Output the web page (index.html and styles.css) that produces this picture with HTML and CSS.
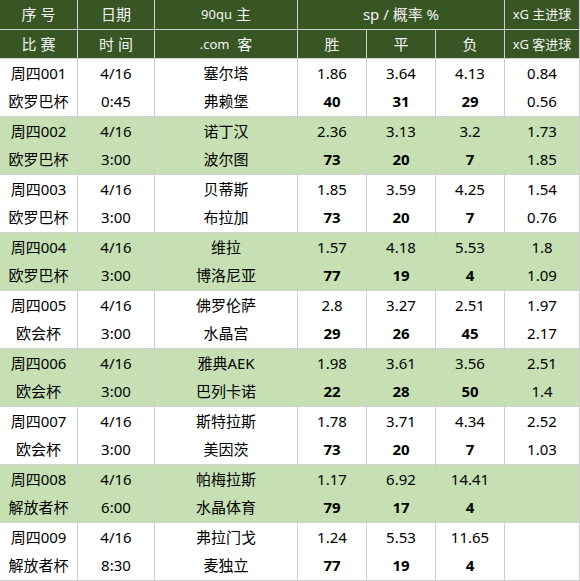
FILE: index.html
```html
<!DOCTYPE html>
<html lang="zh">
<head>
<meta charset="utf-8">
<title>90qu</title>
<link rel="stylesheet" href="styles.css">
</head>
<body>
<div class="sheet">
  <div class="hd">序 号</div>
  <div class="hd">日期</div>
  <div class="hd"><span class="sm">90qu</span>&nbsp;主</div>
  <div class="hd span3 mid">sp / 概率 %</div>
  <div class="hd xg">xG 主进球</div>

  <div class="hd">比 赛</div>
  <div class="hd">时 间</div>
  <div class="hd"><span class="sm">.com</span>&nbsp;&nbsp;客</div>
  <div class="hd">胜</div>
  <div class="hd">平</div>
  <div class="hd">负</div>
  <div class="hd xg">xG 客进球</div>

  <div class="c"><span>周四001</span><span>欧罗巴杯</span></div>
  <div class="c"><span>4/16</span><span>0:45</span></div>
  <div class="c"><span>塞尔塔</span><span>弗赖堡</span></div>
  <div class="c"><span>1.86</span><b>40</b></div>
  <div class="c"><span>3.64</span><b>31</b></div>
  <div class="c"><span>4.13</span><b>29</b></div>
  <div class="c"><span>0.84</span><span>0.56</span></div>

  <div class="c alt"><span>周四002</span><span>欧罗巴杯</span></div>
  <div class="c alt"><span>4/16</span><span>3:00</span></div>
  <div class="c alt"><span>诺丁汉</span><span>波尔图</span></div>
  <div class="c alt"><span>2.36</span><b>73</b></div>
  <div class="c alt"><span>3.13</span><b>20</b></div>
  <div class="c alt"><span>3.2</span><b>7</b></div>
  <div class="c alt"><span>1.73</span><span>1.85</span></div>

  <div class="c"><span>周四003</span><span>欧罗巴杯</span></div>
  <div class="c"><span>4/16</span><span>3:00</span></div>
  <div class="c"><span>贝蒂斯</span><span>布拉加</span></div>
  <div class="c"><span>1.85</span><b>73</b></div>
  <div class="c"><span>3.59</span><b>20</b></div>
  <div class="c"><span>4.25</span><b>7</b></div>
  <div class="c"><span>1.54</span><span>0.76</span></div>

  <div class="c alt"><span>周四004</span><span>欧罗巴杯</span></div>
  <div class="c alt"><span>4/16</span><span>3:00</span></div>
  <div class="c alt"><span>维拉</span><span>博洛尼亚</span></div>
  <div class="c alt"><span>1.57</span><b>77</b></div>
  <div class="c alt"><span>4.18</span><b>19</b></div>
  <div class="c alt"><span>5.53</span><b>4</b></div>
  <div class="c alt"><span>1.8</span><span>1.09</span></div>

  <div class="c"><span>周四005</span><span>欧会杯</span></div>
  <div class="c"><span>4/16</span><span>3:00</span></div>
  <div class="c"><span>佛罗伦萨</span><span>水晶宫</span></div>
  <div class="c"><span>2.8</span><b>29</b></div>
  <div class="c"><span>3.27</span><b>26</b></div>
  <div class="c"><span>2.51</span><b>45</b></div>
  <div class="c"><span>1.97</span><span>2.17</span></div>

  <div class="c alt"><span>周四006</span><span>欧会杯</span></div>
  <div class="c alt"><span>4/16</span><span>3:00</span></div>
  <div class="c alt"><span>雅典AEK</span><span>巴列卡诺</span></div>
  <div class="c alt"><span>1.98</span><b>22</b></div>
  <div class="c alt"><span>3.61</span><b>28</b></div>
  <div class="c alt"><span>3.56</span><b>50</b></div>
  <div class="c alt"><span>2.51</span><span>1.4</span></div>

  <div class="c"><span>周四007</span><span>欧会杯</span></div>
  <div class="c"><span>4/16</span><span>3:00</span></div>
  <div class="c"><span>斯特拉斯</span><span>美因茨</span></div>
  <div class="c"><span>1.78</span><b>73</b></div>
  <div class="c"><span>3.71</span><b>20</b></div>
  <div class="c"><span>4.34</span><b>7</b></div>
  <div class="c"><span>2.52</span><span>1.03</span></div>

  <div class="c alt"><span>周四008</span><span>解放者杯</span></div>
  <div class="c alt"><span>4/16</span><span>6:00</span></div>
  <div class="c alt"><span>帕梅拉斯</span><span>水晶体育</span></div>
  <div class="c alt"><span>1.17</span><b>79</b></div>
  <div class="c alt"><span>6.92</span><b>17</b></div>
  <div class="c alt"><span>14.41</span><b>4</b></div>
  <div class="c alt"></div>

  <div class="c"><span>周四009</span><span>解放者杯</span></div>
  <div class="c"><span>4/16</span><span>8:30</span></div>
  <div class="c"><span>弗拉门戈</span><span>麦独立</span></div>
  <div class="c"><span>1.24</span><b>77</b></div>
  <div class="c"><span>5.53</span><b>19</b></div>
  <div class="c"><span>11.65</span><b>4</b></div>
  <div class="c"></div>
</div>
</body>
</html>
```

FILE: styles.css
```css
* { box-sizing: border-box; }
html, body { margin: 0; padding: 0; background: #ffffff; }
body {
  font-family: "Noto Sans", "Noto Sans CJK SC", sans-serif;
  font-size: 15px;
  color: #000000;
}
.sheet {
  display: grid;
  grid-template-columns: 77px 76px 142px 68px 68px 68px 74px;
  grid-template-rows: 29px 28px repeat(9, 57px);
  gap: 1px;
  padding: 0 1px 1px 0;
  width: 580px;
  background: #cfcfcf;
}
.hd {
  background: #375623;
  color: #f4f4f4;
  display: flex;
  align-items: center;
  justify-content: center;
  white-space: pre;
  line-height: 1;
}
.hd .sm { font-size: 13px; }
.mid { font-size: 15px; }
.span3 { grid-column: span 3; }
.xg { font-size: 13px; }
.c {
  background: #ffffff;
  display: flex;
  flex-direction: column;
  justify-content: center;
  align-items: center;
}
.c.alt { background: #c6e0b4; }
.c span, .c b {
  display: block;
  height: 28px;
  line-height: 27px;
  white-space: nowrap;
}
.c b { font-weight: 700; }
```
